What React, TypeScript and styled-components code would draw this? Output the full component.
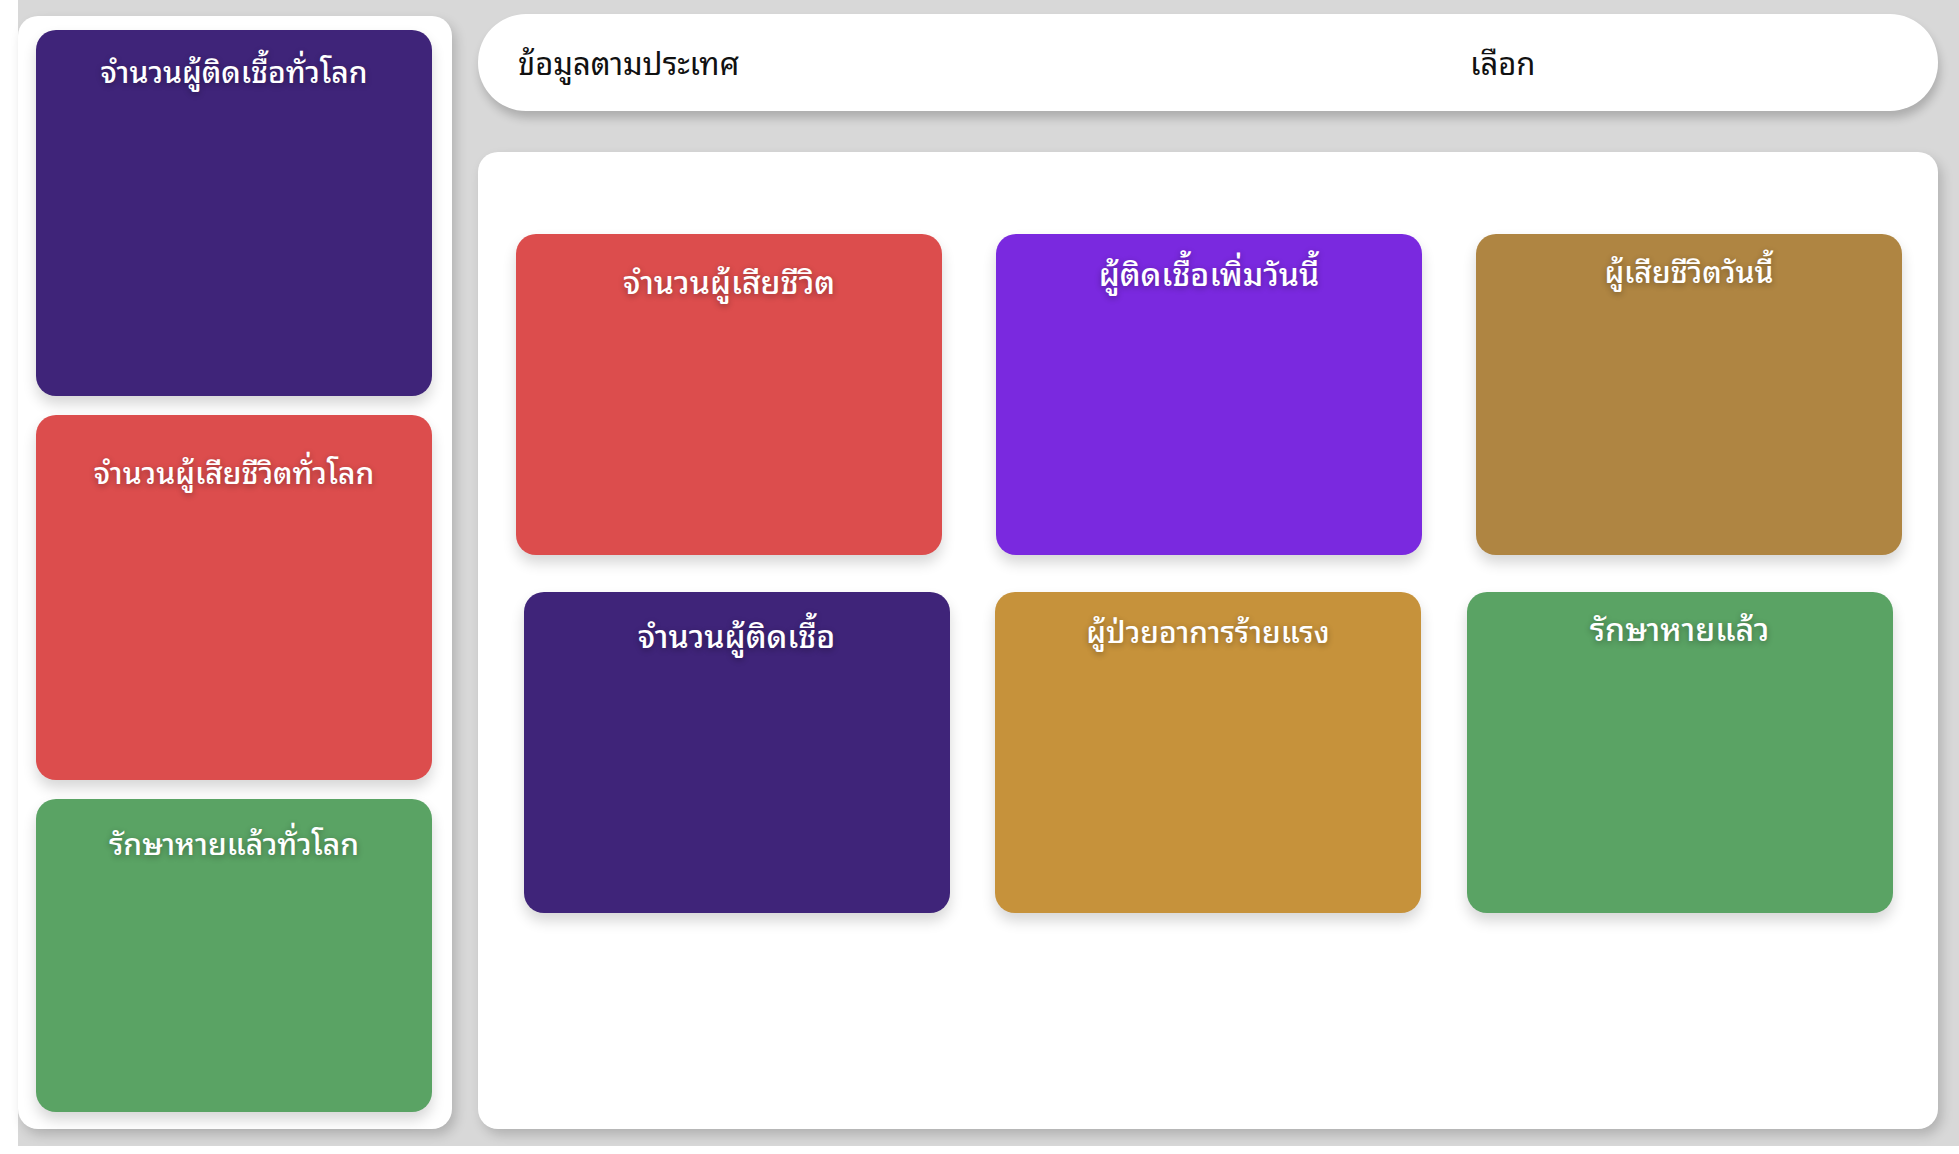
import React from "react";
import styled, { createGlobalStyle } from "styled-components";

const GlobalStyle = createGlobalStyle`
  html, body {
    margin: 0;
    padding: 0;
    background: #ffffff;
  }
  body {
    font-family: "Noto Sans Thai Looped", "Noto Serif Thai", serif;
  }
  * { box-sizing: border-box; }
`;

const Page = styled.div`
  margin-left: 18px;
  height: 1146px;
  background: #d8d8d8;
  display: flex;
  align-items: flex-start;
  gap: 26px;
  padding-right: 21px;
`;

const SidePanel = styled.aside`
  margin-top: 16px;
  width: 434px;
  height: 1113px;
  background: #ffffff;
  border-radius: 20px;
  box-shadow: 4px 6px 12px rgba(0, 0, 0, 0.18);
  padding: 14px 20px 17px 18px;
  display: flex;
  flex-direction: column;
  gap: 19px;
`;

const MainColumn = styled.div`
  flex: 1;
  padding-top: 14px;
  display: flex;
  flex-direction: column;
  gap: 41px;
`;

const Header = styled.header`
  height: 97px;
  background: #ffffff;
  border-radius: 48px;
  box-shadow: 2px 7px 10px rgba(0, 0, 0, 0.2);
  padding: 0 32px 2px 40px;
  display: grid;
  grid-template-columns: 952px auto;
  align-items: center;
`;

const HeaderText = styled.span`
  font-size: 31px;
  color: #111111;
  line-height: 1.5;
`;

const MainPanel = styled.main`
  height: 977px;
  background: #ffffff;
  border-radius: 20px;
  box-shadow: 4px 6px 12px rgba(0, 0, 0, 0.18);
  padding-top: 82px;
  display: flex;
  flex-direction: column;
  gap: 37px;
`;

const CardRow = styled.div<{ $mode: "between" | "evenly" }>`
  display: flex;
  justify-content: ${(p) => (p.$mode === "between" ? "space-between" : "space-evenly")};
  padding: ${(p) => (p.$mode === "between" ? "0 36px 0 38px" : "0")};
`;

const StatCard = styled.div<{ $bg: string; $h?: number; $grow?: boolean; $w?: number }>`
  background: ${(p) => p.$bg};
  border-radius: 20px;
  width: ${(p) => (p.$w ? `${p.$w}px` : "auto")};
  height: ${(p) => (p.$h ? `${p.$h}px` : "auto")};
  flex: ${(p) => (p.$grow ? "1" : "none")};
  box-shadow: 0 8px 14px rgba(0, 0, 0, 0.16);
  display: flex;
  flex-direction: column;
  align-items: center;
`;

const CardTitle = styled.h2<{ $top: number; $size?: number }>`
  margin: 0;
  padding-top: ${(p) => p.$top}px;
  font-size: ${(p) => p.$size ?? 30}px;
  font-weight: 500;
  line-height: 45px;
  color: #ffffff;
  text-align: center;
  text-shadow: 0 2px 6px rgba(0, 0, 0, 0.32);
`;

const C = {
  navy: "#3f2479",
  red: "#dc4d4d",
  violet: "#7a29df",
  bronze: "#af8542",
  gold: "#c6923b",
  green: "#5aa364",
};

const sideCards = [
  { title: "จำนวนผู้ติดเชื้อทั่วโลก", bg: C.navy, h: 366, top: 17 },
  { title: "จำนวนผู้เสียชีวิตทั่วโลก", bg: C.red, h: 365, top: 33 },
  { title: "รักษาหายแล้วทั่วโลก", bg: C.green, grow: true, top: 20 },
];

const rowOne = [
  { title: "จำนวนผู้เสียชีวิต", bg: C.red, top: 23, size: 32 },
  { title: "ผู้ติดเชื้อเพิ่มวันนี้", bg: C.violet, top: 15, size: 32 },
  { title: "ผู้เสียชีวิตวันนี้", bg: C.bronze, top: 13, size: 30 },
];

const rowTwo = [
  { title: "จำนวนผู้ติดเชื้อ", bg: C.navy, top: 19, size: 32 },
  { title: "ผู้ป่วยอาการร้ายแรง", bg: C.gold, top: 15, size: 30 },
  { title: "รักษาหายแล้ว", bg: C.green, top: 12, size: 32 },
];

export default function App() {
  return (
    <>
      <GlobalStyle />
      <Page>
        <SidePanel>
          {sideCards.map((c) => (
            <StatCard key={c.title} $bg={c.bg} $h={c.h} $grow={c.grow}>
              <CardTitle $top={c.top}>{c.title}</CardTitle>
            </StatCard>
          ))}
        </SidePanel>
        <MainColumn>
          <Header>
            <HeaderText>ข้อมูลตามประเทศ</HeaderText>
            <HeaderText>เลือก</HeaderText>
          </Header>
          <MainPanel>
            <CardRow $mode="between">
              {rowOne.map((c) => (
                <StatCard key={c.title} $bg={c.bg} $w={426} $h={321}>
                  <CardTitle $top={c.top} $size={c.size}>{c.title}</CardTitle>
                </StatCard>
              ))}
            </CardRow>
            <CardRow $mode="evenly">
              {rowTwo.map((c) => (
                <StatCard key={c.title} $bg={c.bg} $w={426} $h={321}>
                  <CardTitle $top={c.top} $size={c.size}>{c.title}</CardTitle>
                </StatCard>
              ))}
            </CardRow>
          </MainPanel>
        </MainColumn>
      </Page>
    </>
  );
}
